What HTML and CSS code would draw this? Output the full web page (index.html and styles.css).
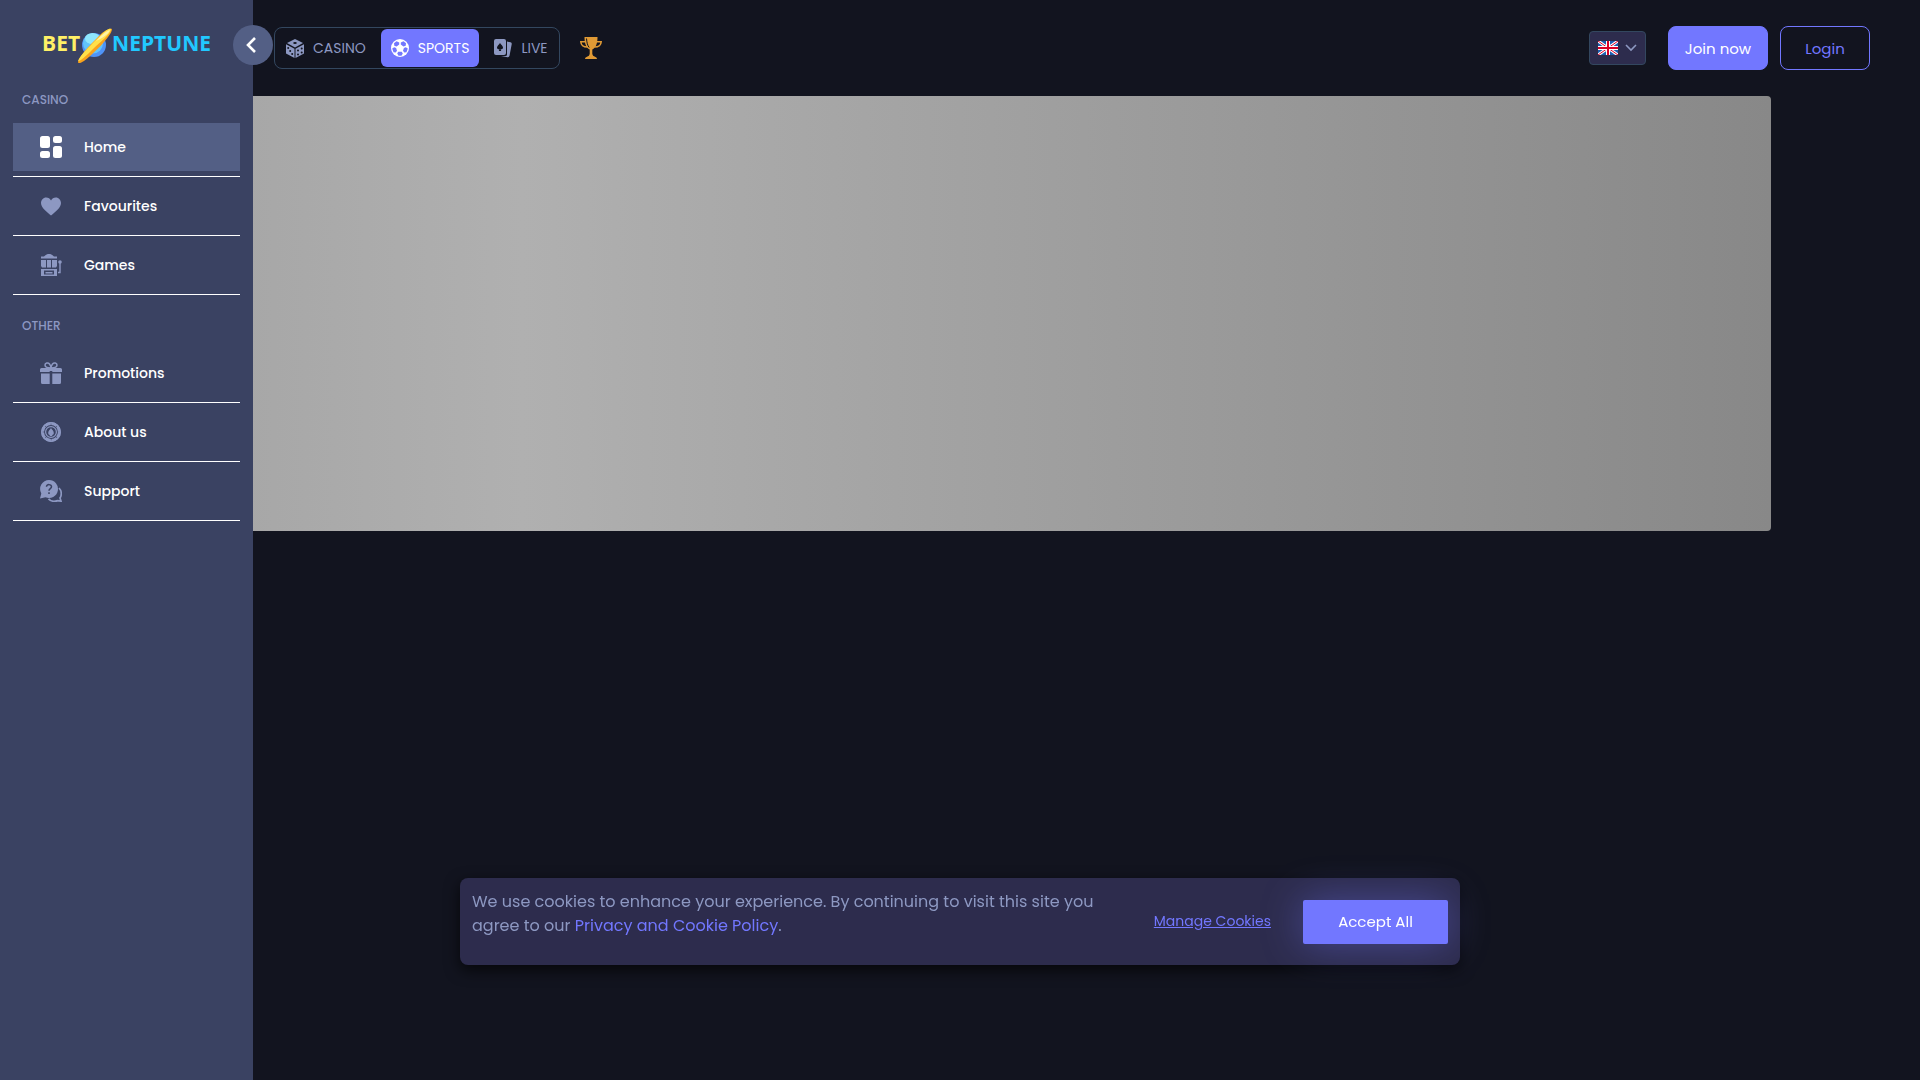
FILE: index.html
```html
<!DOCTYPE html>
<html lang="en">
<head>
    <meta charset="UTF-8">
    <meta name="viewport" content="width=device-width, initial-scale=1.0">
    <title>BetNeptune</title>
    <link rel="stylesheet" href="styles.css">
</head>
<body>
    <aside class="sidebar">
        <button class="sidebar-toggle" type="button" aria-label="Collapse menu">
            <svg width="10" height="16" viewBox="0 0 10 16" fill="none" stroke="#fff" stroke-width="2.6"><path d="M9 1 2 8l7 7"/></svg>
        </button>

        <a class="logo" href="#">
            <span class="logo-bet">BET</span>
            <svg class="logo-planet" width="36" height="36" viewBox="0 0 36 36">
                <circle cx="17" cy="17" r="12" fill="#4f93f7"/>
                <circle cx="16" cy="15.5" r="10" fill="#62c4fa"/>
                <ellipse cx="15.500" cy="10.500" rx="7.500" ry="5.500" fill="#8fe6fd"/>
                <path d="M35 1c-2-1-7 1-12 6C15 15 2 28 1 34c0 2 3 1 6-1C15 27 35 8 35 1z" fill="#f8a21c"/>
                <path d="M34 1c-2-1-6 2-10 6C16 15 3 27 1 33c3 0 8-5 14-11C23 14 34 6 34 1z" fill="#ffe04a"/>
                <path d="M33 2c-4 1-11 7-14 11 5-2 13-7 14-11z" fill="#fff3a6"/>
            </svg>
            <span class="logo-neptune">NEPTUNE</span>
        </a>

        <nav class="menu">
            <h2 class="menu-title">CASINO</h2>
            <ul class="menu-list">
                <li>
                    <a class="menu-link active" href="#">
                        <svg class="menu-icon" viewBox="0 0 22 22"><rect width="10" height="12" rx="2.500"/><rect y="15" width="10" height="7" rx="2.500"/><rect x="13" width="9" height="7" rx="2.500"/><rect x="13" y="10" width="9" height="12" rx="2.500"/></svg>
                        Home
                    </a>
                </li>
                <li>
                    <a class="menu-link" href="#">
                        <svg class="menu-icon" viewBox="0 0 22 22"><path d="M11 20.500C7 17 1 13 1 8 1 5 3.200 2.500 6.200 2.500 8.400 2.500 10 3.700 11 5.500c1-1.800 2.600-3 4.800-3C18.800 2.500 21 5 21 8c0 5-6 9-10 12.500z"/></svg>
                        Favourites
                    </a>
                </li>
                <li>
                    <a class="menu-link" href="#">
                        <svg class="menu-icon" viewBox="0 0 22 22"><path d="M1 4.500h16V2.500h-3C12 .5 10.500 0 9 0S6 .5 4 2.500H1zM1 6h5v7.500H2L1 12zM7 6h4v7.500H7zM12 6h5v6l-1 1.500h-4z"/><path fill-rule="evenodd" d="M1 15h16v7H1zm3 1.500v4h10v-4zm1.500 1.500h7v1.500h-7z"/><path d="M20 8v10.500h-2" fill="none" stroke="#8d98c2" stroke-width="1.400"/><circle cx="20" cy="8" r="1.800"/></svg>
                        Games
                    </a>
                </li>
            </ul>

            <h2 class="menu-title">OTHER</h2>
            <ul class="menu-list">
                <li>
                    <a class="menu-link" href="#">
                        <svg class="menu-icon" viewBox="0 0 22 22"><path d="M1.500 6H9.700v4H0V7.500Q0 6 1.500 6zM12.300 6h8.200Q22 6 22 7.500V10h-9.700zM1 11.500h8.700V22H2.500Q1 22 1 20.500zM12.300 11.500H21v9q0 1.500-1.500 1.500h-7.200zM9 6h4v3H9z"/><path d="M11 6C8 6 5 5 5 3s3-3 4.500-1S11 6 11 6zm0 0c3 0 6-1 6-3s-3-3-4.500-1S11 6 11 6z" fill="none" stroke="#8d98c2" stroke-width="1.500"/></svg>
                        Promotions
                    </a>
                </li>
                <li>
                    <a class="menu-link" href="#">
                        <svg class="menu-icon" viewBox="0 0 22 22"><g fill="none" stroke="#8d98c2"><circle cx="11" cy="11" r="8.400" stroke-width="3" stroke-dasharray="6.100 .5"/><circle cx="11" cy="11" r="9.200" stroke-width="1.600"/><circle cx="11" cy="11" r="5.400" stroke-width="1.200"/></g><path d="M11 7c1 1.500 2.800 3 2.800 5 0 1.500-1 2-1.800 1.900l.4 1.100H9.600l.4-1.100c-.8.1-1.800-.4-1.800-1.900 0-2 1.800-3.500 2.800-5z"/></svg>
                        About us
                    </a>
                </li>
                <li>
                    <a class="menu-link" href="#">
                        <svg class="menu-icon" viewBox="0 0 22 22"><path d="M9 0a9 9 0 1 1-3.500 17.300L0 18.500l1.300-5A9 9 0 0 1 9 0z"/><path d="M19 8c3 3 2.700 7.500 1 10l1 3.200-3.500-.6c-3 1.200-7 .6-9-1.700" fill="none" stroke="#8d98c2" stroke-width="1.700"/><path d="M6.500 6.800C6.500 3.800 11.500 4 11.500 6.800c0 1.900-2.500 1.900-2.500 4M9 12.300v1.700" fill="none" stroke="#3a4262" stroke-width="1.500"/></svg>
                        Support
                    </a>
                </li>
            </ul>
        </nav>
    </aside>

    <div class="page">
        <header class="header">
            <nav class="tabs">
                <a class="tab" href="#">
                    <svg width="18" height="19" viewBox="0 0 18 19"><path d="M9 0l8 4-8 4.500L1 4zM0 5.300l8.500 4.500V19L0 14.500zM18 5.300V14.500L9.500 19V9.800z" fill="#8d98c2"/><g fill="#12141f"><ellipse cx="9" cy="4" rx="1.800" ry="1"/><circle cx="2.200" cy="9" r="1"/><circle cx="4.200" cy="12" r="1"/><circle cx="6.200" cy="15" r="1"/><circle cx="12" cy="11.500" r="1"/><circle cx="15.700" cy="9.500" r="1"/><circle cx="12" cy="15.500" r="1"/><circle cx="15.700" cy="13.500" r="1"/></g></svg>
                    CASINO
                </a>
                <a class="tab active" href="#">
                    <svg width="18" height="18" viewBox="0 0 18 18"><circle cx="9" cy="9" r="9" fill="#fff"/><g fill="#7277ff"><path d="M5.500 2.200L8.200 3.600v2L5.600 7.500 3.300 6.800 3 4.200zM12.500 2.200L9.800 3.600v2l2.600 1.900 2.300-.7.300-2.600zM1.200 9.500l2-1.200 1.900.7.900 2.700-1.300 1.700-2.200-.2zM16.800 9.500l-2-1.200-1.900.7-.9 2.700 1.300 1.700 2.200-.2zM7.300 12.700h3.400l1.100 1.800-1.300 2.200h-3l-1.300-2.200z"/></g></svg>
                    SPORTS
                </a>
                <a class="tab" href="#">
                    <svg width="18" height="19" viewBox="0 0 18 19"><rect width="12" height="16" rx="2" fill="#8d98c2"/><path d="M13 2.500l3.500.8q1.500.4 1.200 2l-2.200 11.500q-.4 1.700-2 1.400L7 17h4.500q1.500 0 1.500-1.500z" fill="#8d98c2"/><path d="M6 4c1 1.500 3 3 3 4.600 0 1.400-1.300 2-2.400 1.300L7.200 12H4.800l.6-2.100C4.300 10.600 3 10 3 8.600 3 7 5 5.500 6 4z" fill="#12141f"/></svg>
                    LIVE
                </a>
            </nav>
            <a class="trophy" href="#" aria-label="Tournaments">
                <svg width="22" height="22" viewBox="0 0 22 22"><path d="M4.500 0h13c0 6-1.500 11-5.200 12.500V17q0 2 3.200 3 1.500.5 1.500 2H5q0-1.500 1.500-2 3.200-1 3.200-3v-4.500C6 11 4.500 6 4.500 0z" fill="#e09a35"/><path d="M5 4.700H.8C1 8 3.500 10 7.500 10M17 4.700h4.200C21 8 18.500 10 14.500 10" fill="none" stroke="#e09a35" stroke-width="1.500"/><path d="M6.500 1.500c.3 4 1 7 2.700 9" fill="none" stroke="#12141f"/></svg>
            </a>

            <div class="header-actions">
                <label class="language">
                    <svg width="20" height="14" viewBox="0 0 20 14"><rect width="20" height="14" fill="#1c5fb0"/><path d="M0 0l20 14M20 0L0 14" stroke="#fff" stroke-width="3"/><path d="M0 0l20 14M20 0L0 14" stroke="#d80027" stroke-width="1"/><path d="M10 0v14M0 7h20" stroke="#fff" stroke-width="4"/><path d="M10 0v14M0 7h20" stroke="#d80027" stroke-width="2"/></svg>
                    <svg width="12" height="8" viewBox="0 0 12 8" fill="none" stroke="#8d98c2" stroke-width="1.600"><path d="M1 1l5 5 5-5"/></svg>
                    <select class="language-select" aria-label="Language">
                        <option value="en" aria-label="English"></option>
                    </select>
                </label>
                <button class="btn btn-join" type="button">Join now</button>
                <button class="btn btn-login" type="button">Login</button>
            </div>
        </header>

        <main class="content">
            <div class="banner"></div>
        </main>
    </div>

    <section class="cookies" aria-label="Cookies">
        <p class="cookies-text">We use cookies to enhance your experience. By continuing to visit this site you agree to our <a href="#">Privacy and Cookie Policy</a>.</p>
        <div class="cookies-actions">
            <a class="cookies-manage" href="#">Manage Cookies</a>
            <button class="cookies-accept" type="button">Accept All</button>
        </div>
    </section>
</body>
</html>
```

FILE: styles.css
```css
* {
    box-sizing: border-box;
}

body {
    margin: 0;
    min-height: 100vh;
    background: #12141f;
    color: #8d98c2;
    font-family: Poppins, Inter, sans-serif;
    font-size: 14px;
}

a {
    color: inherit;
    text-decoration: none;
}

button {
    font-family: inherit;
    cursor: pointer;
}

svg {
    display: block;
    flex-shrink: 0;
}

/* Sidebar */
.sidebar {
    position: fixed;
    z-index: 2;
    top: 0;
    bottom: 0;
    left: 0;
    width: 253px;
    padding: 0 13px;
    background: #3a4262;
}

.sidebar-toggle {
    position: absolute;
    top: 25px;
    right: -20px;
    width: 40px;
    height: 40px;
    padding: 0 0 0 13px;
    border: 0;
    border-radius: 50%;
    background: #535f85;
}

.logo {
    display: flex;
    align-items: center;
    justify-content: center;
    height: 88px;
    padding-bottom: 2px;
    font-family: "Open Sans", sans-serif;
    font-size: 21px;
    font-weight: 700;
}

.logo-bet {
    color: #fff066;
}

.logo-planet {
    margin: 6px -1px 0 -3px;
}

.logo-neptune {
    color: #21c8ff;
}

.menu-title {
    margin: 0;
    padding: 0 9px;
    font-size: 12px;
    font-weight: 500;
    line-height: 24px;
}

.menu-list {
    margin: 0;
    padding: 11px 0 14px;
    list-style: none;
}

.menu-list li {
    margin-bottom: 5px;
    padding-bottom: 5px;
    border-bottom: 1px solid #fff;
}

.menu-link {
    display: flex;
    align-items: center;
    gap: 22px;
    height: 48px;
    padding: 0 27px;
    color: #fff;
    font-weight: 500;
}

.menu-link.active {
    background: #535f85;
}

.menu-icon {
    width: 22px;
    height: 22px;
    fill: #8d98c2;
}

.menu-link.active .menu-icon {
    fill: #fff;
}

/* Header */
.page {
    padding-left: 274px;
}

.header {
    display: flex;
    align-items: center;
    height: 96px;
    padding-right: 50px;
}

.tabs {
    display: flex;
    gap: 5px;
    height: 42px;
    padding: 1px;
    border: 1px solid #33475f;
    border-radius: 8px;
}

.tab {
    display: flex;
    align-items: center;
    gap: 9px;
    padding: 0 10px;
    border-radius: 6px;
}

.tab.active {
    background: #7277ff;
    color: #fff;
}

.trophy {
    margin-left: 20px;
}

.header-actions {
    display: flex;
    align-items: center;
    gap: 12px;
    margin-left: auto;
}

.language {
    position: relative;
    display: flex;
    align-items: center;
    gap: 7px;
    height: 34px;
    margin-right: 10px;
    padding: 0 8px;
    border: 1px solid #33475f;
    border-radius: 4px;
    background: #2d2c4d;
}

.language-select {
    position: absolute;
    inset: 0;
    width: 100%;
    border: 0;
    background: none;
    appearance: none;
    cursor: pointer;
}

.btn {
    height: 44px;
    border: 1px solid #7277ff;
    border-radius: 8px;
    font-size: 15px;
}

.btn-join {
    width: 100px;
    background: #7277ff;
    color: #fff;
}

.btn-login {
    width: 90px;
    background: none;
    color: #7277ff;
}

/* Banner placeholder */
.content {
    padding-right: 149px;
}

.banner {
    height: 435px;
    margin-left: -125px;
    border-radius: 4px;
    background: linear-gradient(90deg, #a4a4a4, #b0b0b0 23%, #888);
}

/* Cookie notice */
.cookies {
    position: fixed;
    z-index: 3;
    bottom: 115px;
    left: 0;
    right: 0;
    display: flex;
    justify-content: space-between;
    max-width: 1000px;
    min-height: 87px;
    margin: 0 auto;
    padding: 12px;
    border-radius: 8px;
    background: #2d2c4d;
    box-shadow: 0 5px 15px rgba(0, 0, 0, 0.7);
}

.cookies-text {
    max-width: 640px;
    margin: 0;
    font-size: 16px;
    line-height: 24px;
}

.cookies-text a {
    color: #7277ff;
}

.cookies-actions {
    display: flex;
    align-items: center;
    gap: 32px;
}

.cookies-manage {
    color: #7277ff;
    text-decoration: underline;
}

.cookies-accept {
    width: 145px;
    height: 44px;
    border: 0;
    border-radius: 2px;
    background: #7277ff;
    box-shadow: 0 0 40px rgba(114, 119, 255, 0.4);
    color: #fff;
    font-size: 15px;
}
```
